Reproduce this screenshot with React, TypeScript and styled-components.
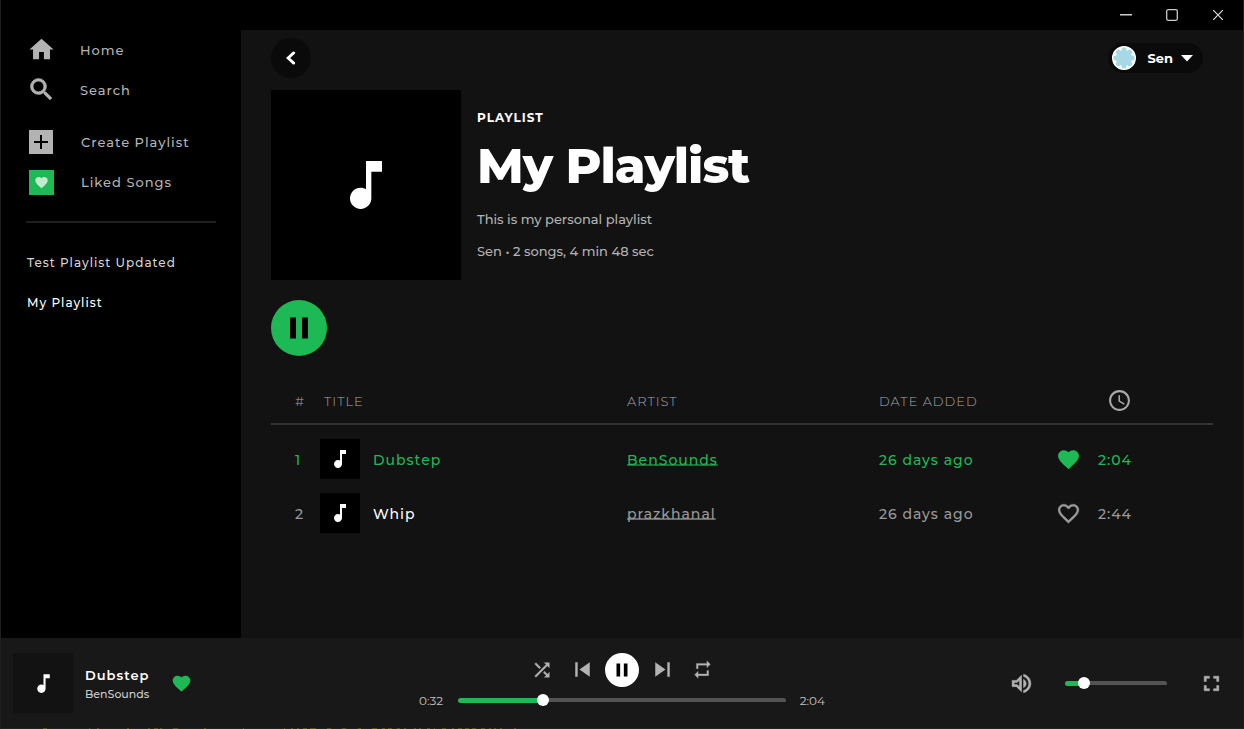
import React from "react";
import styled, { createGlobalStyle, css } from "styled-components";
import {
  MdHome, MdSearch, MdFavorite, MdFavoriteBorder, MdMusicNote, MdPause, MdSkipPrevious,
  MdSkipNext, MdShuffle, MdRepeat, MdOutlineVolumeUp, MdFullscreen, MdAccessTime, MdAdd,
} from "react-icons/md";

const c = {
  green: "#1db954",
  muted: "#b3b3b3",
  dim: "#9a9a9a",
  panel: "#121212",
  bar: "#181818",
};

const GlobalStyle = createGlobalStyle`
  *, *::before, *::after { box-sizing: border-box; }
  body { margin: 0; background: #000; color: #fff; font-family: Montserrat, Inter, "Liberation Sans", sans-serif; font-size: 13px; }
  button { font: inherit; color: inherit; background: none; border: 0; padding: 0; cursor: pointer; }
  a { color: inherit; text-decoration: none; }
  h1, p, ul { margin: 0; padding: 0; }
  ul { list-style: none; }
  svg { display: block; flex: none; }
`;

const Window = styled.div`
  min-height: 100vh;
  display: flex;
  flex-direction: column;
  border: 1px solid #1f1f1f;
  border-width: 0 1px;
`;

const TitleBar = styled.header`
  display: flex;
  justify-content: flex-end;
  height: 30px;
  padding-right: 2px;
`;

const CaptionButton = styled.button`
  display: grid;
  place-items: center;
  width: 46px;
  height: 30px;
`;

const Body = styled.div`
  flex: 1;
  display: flex;
`;

const Sidebar = styled.aside`
  width: 240px;
  flex: none;
  padding: 0 25px;
`;

const NavList = styled.ul`
  & + & { margin-top: 12px; }
`;

const NavLink = styled.a<{ $gap: number }>`
  display: flex;
  align-items: center;
  gap: ${(p) => p.$gap}px;
  height: 40px;
  color: ${c.muted};
  font-weight: 500;
  letter-spacing: 1px;
`;

/* the icon set draws an unfilled 24x24 frame, which must stay invisible on stroked icons */
const noFrame = css`
  path[fill="none"] { stroke: none; }
`;

const NavIcon = styled.span`
  display: grid;
  place-items: center;
  width: 30px;
  padding-bottom: 1px;
  ${noFrame}
`;

const Tile = styled.span<{ $size: number; $fill: string }>`
  display: grid;
  place-items: center;
  width: ${(p) => p.$size}px;
  height: ${(p) => p.$size}px;
  margin-left: 3px;
  background: ${(p) => p.$fill};
  color: #000;
`;

const Divider = styled.hr`
  height: 2px;
  margin: 19px 0;
  border: 0;
  background: #1f1f1f;
`;

const PlaylistLink = styled.a<{ $active?: boolean }>`
  display: flex;
  align-items: center;
  height: 40px;
  padding-left: 1px;
  color: ${(p) => (p.$active ? "#fff" : "#d4d4d4")};
  font-size: 12px;
  font-weight: 500;
  letter-spacing: 1px;
`;

const Main = styled.main`
  flex: 1;
  min-width: 0;
  padding: 8px 30px 0;
  background: ${c.panel};
`;

const TopRow = styled.div`
  display: flex;
  align-items: center;
  justify-content: space-between;
  padding-right: 10px;
`;

const BackButton = styled.button`
  display: grid;
  place-items: center;
  width: 40px;
  height: 40px;
  border-radius: 50%;
  background: #0a0a0a;
`;

const UserButton = styled.button`
  display: flex;
  align-items: center;
  height: 30px;
  padding: 0 10px 0 4px;
  border-radius: 15px;
  background: #0a0a0a;
  font-weight: 700;
  span { margin: 0 8px 0 12px; }
`;

const Hero = styled.section`
  display: flex;
  gap: 16px;
  margin-top: 12px;
`;

const Cover = styled.div<{ $size: number; $fill?: string }>`
  display: grid;
  place-items: center;
  flex: none;
  width: ${(p) => p.$size}px;
  height: ${(p) => p.$size}px;
  background: ${(p) => p.$fill ?? "#000"};
  color: #fff;
`;

const HeroText = styled.div`
  padding-top: 20px;
`;

const Kind = styled.p`
  font-size: 12px;
  line-height: 16px;
  font-weight: 700;
  letter-spacing: 1px;
`;

const Title = styled.h1`
  margin: 10px 0 14px;
  font-size: 49px;
  line-height: 60px;
  font-weight: 800;
  letter-spacing: -1px;
`;

const Meta = styled.p`
  height: 32px;
  line-height: 18px;
  font-weight: 500;
  color: ${c.muted};
`;

const PlayButton = styled.button<{ $size: number; $fill: string }>`
  display: grid;
  place-items: center;
  width: ${(p) => p.$size}px;
  height: ${(p) => p.$size}px;
  border-radius: 50%;
  background: ${(p) => p.$fill};
  color: #000;
`;

const Actions = styled.div`
  margin: 20px 0 22px;
`;

const Tracks = styled.table`
  width: 100%;
  border-collapse: collapse;
  table-layout: fixed;
  letter-spacing: 1px;
  font-size: 14px;
  font-weight: 500;
  th, td { padding: 0; text-align: left; }
`;

const HeadRow = styled.tr`
  height: 46px;
  border-bottom: 2px solid #333;
  color: #a8a8a8;
  font-size: 13px;
  th { font-weight: 300; }
  th:first-child { padding-left: 24px; }
  th:nth-child(2) { padding-left: 4px; }
  th:last-child { padding-left: 9px; }
`;

const Row = styled.tr<{ $playing?: boolean }>`
  height: 54px;
  color: ${(p) => (p.$playing ? c.green : c.dim)};
  td { padding-top: 2px; }
  td:first-child { padding-left: 24px; }
  td:nth-child(2), td:nth-child(5) { padding-top: 0; }
  ${(p) => !p.$playing && css`td:nth-child(2) { color: #fff; }`}
  a {
    text-decoration: underline 2px ${(p) => (p.$playing ? "#18703a" : "#6a6a6a")};
    text-decoration-skip-ink: none;
    text-underline-offset: -1px;
  }
`;

const Spacer = styled.tbody`
  height: 8px;
`;

const TrackTitle = styled.div`
  display: flex;
  align-items: center;
  gap: 13px;
  span { padding-top: 2px; }
`;

const Player = styled.footer`
  display: grid;
  grid-template-columns: 1fr 406px 1fr;
  align-items: center;
  height: 90px;
  padding: 0 12px;
  background: ${c.bar};
`;

const NowPlaying = styled.div`
  display: flex;
  align-items: center;
  gap: 12px;
`;

const NowText = styled.div`
  margin-right: 9px;
  padding-top: 4px;
  p { line-height: 19px; font-size: 11px; font-weight: 500; color: #ccc; }
  p:first-child { font-size: 13px; font-weight: 600; letter-spacing: 1px; color: #fff; }
`;

const Center = styled.div`
  display: flex;
  flex-direction: column;
  gap: 4px;
  padding-bottom: 3px;
`;

const Controls = styled.div`
  display: flex;
  align-items: center;
  justify-content: center;
  gap: 6px;
`;

const IconButton = styled.button<{ $w?: number; $color?: string }>`
  display: grid;
  place-items: center;
  width: ${(p) => p.$w ?? 25}px;
  color: ${(p) => p.$color ?? c.muted};
  ${noFrame}
`;

const Timeline = styled.div`
  display: grid;
  grid-template-columns: 39px 1fr 39px;
  align-items: center;
  font-size: 12px;
  line-height: 20px;
  color: #c4c4c4;
  span:last-child { text-align: right; }
`;

const Range = styled.input`
  appearance: none;
  display: block;
  width: 100%;
  height: 12px;
  margin: 0;
  background: transparent;
  &::-webkit-slider-runnable-track {
    height: 5px;
    border-radius: 3px;
    background:
      linear-gradient(${c.green}, ${c.green}) left / var(--value) 100% no-repeat,
      linear-gradient(#535353, #535353) top / 100% 4px no-repeat;
  }
  &::-webkit-slider-thumb {
    appearance: none;
    width: 12px;
    height: 12px;
    margin-top: -4px;
    border-radius: 50%;
    background: #fff;
  }
`;

const Side = styled.div`
  display: flex;
  align-items: center;
  justify-content: flex-end;
  padding-right: 7px;
`;

const VolumeBox = styled.div`
  width: 102px;
  margin: 0 32px 0 31px;
`;

const Edge = styled.div`
  height: 1px;
  overflow: hidden;
  background: #222;
`;

const playlists = ["Test Playlist Updated", "My Playlist"];
const tracks = [
  { title: "Dubstep", artist: "BenSounds", added: "26 days ago", time: "2:04", liked: true },
  { title: "Whip", artist: "prazkhanal", added: "26 days ago", time: "2:44", liked: false },
];

// start and length of each mark along the window's bottom edge
const edgeMarks = [
  [42, 4], [88, 1], [96, 2], [126, 2], [147, 2], [153, 4], [159, 2], [172, 5], [203, 2], [242, 1],
  [283, 1], [290, 2], [296, 2], [302, 4], [309, 6], [326, 4], [341, 4], [357, 3], [371, 5], [381, 3],
  [387, 4], [396, 3], [403, 2], [413, 2], [418, 2], [426, 3], [433, 1], [441, 4], [451, 2], [457, 4],
  [464, 4], [471, 4], [480, 4], [488, 2], [493, 2], [499, 2], [513, 2],
];

function Slider({ label, value }: { label: string; value: number }) {
  const [v, setV] = React.useState(value);
  return (
    <Range
      type="range"
      aria-label={label}
      value={v}
      onChange={(e) => setV(Number(e.target.value))}
      style={{ "--value": `${v}%` } as React.CSSProperties}
    />
  );
}

function Avatar() {
  return (
    <svg width="24" height="24" viewBox="0 0 24 24" aria-hidden="true">
      <circle cx="12" cy="12" r="11.3" fill="#a6d8e6" stroke="#fff" strokeWidth="1.4" />
      {[0, 1, 2, 3, 4, 5, 6, 7].map((i) => (
        <path key={i} d="M9.2 1h5.600L12 4.300z" fill="#fff" transform={`rotate(${22.5 + i * 45} 12 12)`} />
      ))}
    </svg>
  );
}

export default function App() {
  return (
    <>
      <GlobalStyle />
      <Window>
        <TitleBar>
          <CaptionButton aria-label="Minimize">
            <svg width="12" height="12"><path d="M0 5.750h12" stroke="#ccc" strokeWidth="1.5" /></svg>
          </CaptionButton>
          <CaptionButton aria-label="Maximize">
            <svg width="12" height="12"><rect x=".7" y=".7" width="10.600" height="10.600" rx="1.5" fill="none" stroke="#ccc" strokeWidth="1.3" /></svg>
          </CaptionButton>
          <CaptionButton aria-label="Close">
            <svg width="10" height="10"><path d="M0 0l10 10M10 0L0 10" stroke="#ddd" strokeWidth="1.2" /></svg>
          </CaptionButton>
        </TitleBar>
        <Body>
          <Sidebar>
            <nav>
              <NavList>
                <li><NavLink href="#home" $gap={24}><NavIcon><MdHome size={29} /></NavIcon>Home</NavLink></li>
                <li><NavLink href="#search" $gap={24}><NavIcon><MdSearch size={29} strokeWidth={0.7} /></NavIcon>Search</NavLink></li>
              </NavList>
              <NavList>
                <li><NavLink href="#create" $gap={28}><Tile $size={24} $fill={c.muted}><MdAdd size={24} /></Tile>Create Playlist</NavLink></li>
                <li><NavLink href="#liked" $gap={27}><Tile $size={25} $fill={c.green}><MdFavorite size={15} color="#c0ebcf" /></Tile>Liked Songs</NavLink></li>
              </NavList>
              <Divider />
              <ul>
                {playlists.map((name) => (
                  <li key={name}><PlaylistLink href="#playlist" $active={name === "My Playlist"}>{name}</PlaylistLink></li>
                ))}
              </ul>
            </nav>
          </Sidebar>
          <Main>
            <TopRow>
              <BackButton aria-label="Back">
                <svg width="10" height="14"><path d="M7.700 1.900L2.100 7l5.600 5.100" fill="none" stroke="#fff" strokeWidth="2.800" strokeLinecap="round" /></svg>
              </BackButton>
              <UserButton>
                <Avatar />
                <span>Sen</span>
                <svg width="12" height="7"><path d="M0 0h12L6 6.500z" fill="#fff" /></svg>
              </UserButton>
            </TopRow>
            <Hero>
              <Cover $size={190}><MdMusicNote size={64} /></Cover>
              <HeroText>
                <Kind>PLAYLIST</Kind>
                <Title>My Playlist</Title>
                <Meta>This is my personal playlist</Meta>
                <Meta>Sen • 2 songs, 4 min 48 sec</Meta>
              </HeroText>
            </Hero>
            <Actions>
              <PlayButton $size={56} $fill={c.green} aria-label="Pause playlist"><MdPause size={36} /></PlayButton>
            </Actions>
            <Tracks>
              <colgroup>
                <col style={{ width: 49 }} />
                <col />
                <col style={{ width: 252 }} />
                <col style={{ width: 177 }} />
                <col style={{ width: 42 }} />
                <col style={{ width: 115 }} />
              </colgroup>
              <thead>
                <HeadRow>
                  <th>#</th><th>TITLE</th><th>ARTIST</th><th>DATE ADDED</th>
                  <th aria-label="Liked" /><th aria-label="Duration"><MdAccessTime size={25} /></th>
                </HeadRow>
              </thead>
              <Spacer><tr><td /></tr></Spacer>
              <tbody>
                {tracks.map((t, i) => (
                  <Row key={t.title} $playing={i === 0}>
                    <td>{i + 1}</td>
                    <td><TrackTitle><Cover $size={40}><MdMusicNote size={24} /></Cover><span>{t.title}</span></TrackTitle></td>
                    <td><a href="#artist">{t.artist}</a></td>
                    <td>{t.added}</td>
                    <td>
                      <IconButton aria-label="Like" $color="inherit">
                        {t.liked ? <MdFavorite size={25} /> : <MdFavoriteBorder size={25} strokeWidth={0.3} />}
                      </IconButton>
                    </td>
                    <td>{t.time}</td>
                  </Row>
                ))}
              </tbody>
            </Tracks>
          </Main>
        </Body>
        <Player>
          <NowPlaying>
            <Cover $size={60} $fill={c.panel}><MdMusicNote size={25} /></Cover>
            <NowText><p>Dubstep</p><p>BenSounds</p></NowText>
            <IconButton aria-label="Like" $w={21} $color={c.green}><MdFavorite size={21} /></IconButton>
          </NowPlaying>
          <Center>
            <Controls>
              <IconButton $w={34} aria-label="Shuffle"><MdShuffle size={22} strokeWidth={0.4} /></IconButton>
              <IconButton $w={34} aria-label="Previous"><MdSkipPrevious size={29} /></IconButton>
              <PlayButton $size={34} $fill="#fff" aria-label="Pause"><MdPause size={22} /></PlayButton>
              <IconButton $w={34} aria-label="Next"><MdSkipNext size={29} /></IconButton>
              <IconButton $w={34} aria-label="Repeat"><MdRepeat size={21} strokeWidth={0.3} /></IconButton>
            </Controls>
            <Timeline><span>0:32</span><Slider label="Seek" value={25} /><span>2:04</span></Timeline>
          </Center>
          <Side>
            <IconButton aria-label="Mute"><MdOutlineVolumeUp size={25} strokeWidth={0.5} /></IconButton>
            <VolumeBox><Slider label="Volume" value={14} /></VolumeBox>
            <IconButton aria-label="Full screen"><MdFullscreen size={25} strokeWidth={0.5} /></IconButton>
          </Side>
        </Player>
        <Edge>
          <svg width="530" height="1" aria-hidden="true">
            <path d={edgeMarks.map(([x, w]) => `M${x} .5h${w}`).join("")} stroke="#5c4c14" />
          </svg>
        </Edge>
      </Window>
    </>
  );
}
